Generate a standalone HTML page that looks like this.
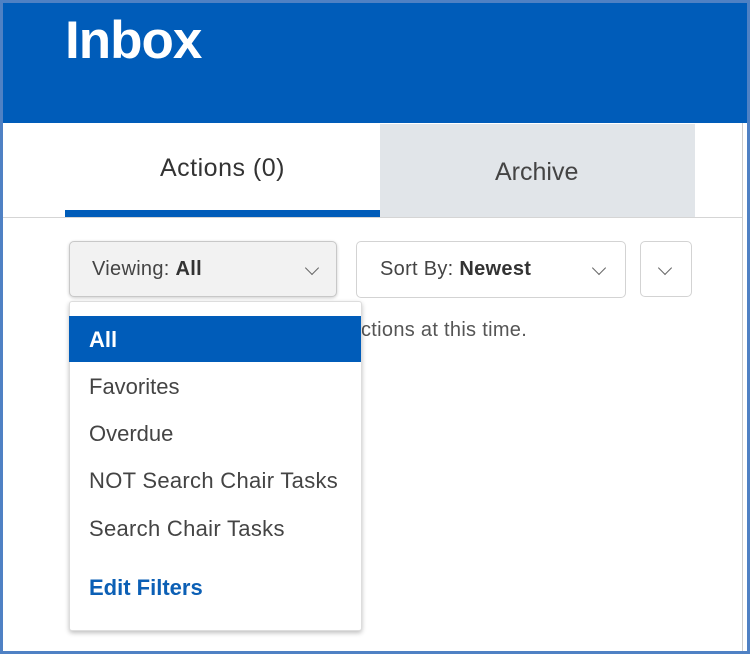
<!DOCTYPE html>
<html><head><style>
body{margin:0;width:750px;height:654px;overflow:hidden;background:#fff;font-family:"Liberation Sans",sans-serif;position:relative}
.a{position:absolute}
.frame{left:0;top:0;width:744px;height:648px;border:3px solid #4f81c4}
.hdr{left:3px;top:3px;width:744px;height:120px;background:#005cb9}
.t{font-size:22px;color:#444;white-space:nowrap}
.box{border:1px solid #d3d3d3;border-radius:5px;background:#fff}
.chev{width:9px;height:9px;border-right:1.5px solid #666;border-bottom:1.5px solid #666;transform:rotate(45deg)}
</style></head><body>
<div class="a frame"></div>
<div class="a hdr"></div>
<div class="a" style="left:65px;top:10px;font-size:53px;font-weight:bold;color:#fff;letter-spacing:-1px">Inbox</div>
<div class="a" style="left:742px;top:123px;width:1px;height:528px;background:#ccc"></div>
<div class="a" style="left:380px;top:124px;width:315px;height:93px;background:#e1e5e9"></div>
<div class="a" style="left:3px;top:217px;width:739px;height:1px;background:#d5d5d5"></div>
<div class="a" style="left:65px;top:210px;width:315px;height:7px;background:#005cb9"></div>
<div class="a t" style="left:160px;top:154px;font-size:25px;color:#333;letter-spacing:0.5px">Actions (0)</div>
<div class="a t" style="left:495px;top:158px;font-size:25px;color:#444">Archive</div>
<div class="a box" style="left:69px;top:241px;width:266px;height:54px;background:#f2f2f2;border-color:#c8c8c8;box-shadow:0 1px 3px rgba(0,0,0,.2)"></div>
<div class="a t" style="left:92px;top:258px;font-size:20px;letter-spacing:0.3px">Viewing: <b style="color:#333">All</b></div>
<div class="a chev" style="left:307px;top:263px"></div>
<div class="a box" style="left:356px;top:241px;width:268px;height:55px"></div>
<div class="a t" style="left:380px;top:258px;font-size:20px;letter-spacing:0.3px">Sort By: <b style="color:#333">Newest</b></div>
<div class="a chev" style="left:594px;top:263px"></div>
<div class="a box" style="left:640px;top:241px;width:50px;height:54px"></div>
<div class="a chev" style="left:660px;top:263px"></div>
<div class="a t" style="left:361px;top:319px;font-size:20px;color:#555;letter-spacing:0.3px">ctions at this time.</div>
<div class="a" style="left:69px;top:301px;width:291px;height:328px;background:#fff;border:1px solid #ddd;border-radius:3px;box-shadow:0 2px 5px rgba(0,0,0,.25)"></div>
<div class="a" style="left:69px;top:316px;width:292px;height:46px;background:#005cb9"></div>
<div class="a t" style="left:89px;top:327px;color:#fff;font-weight:bold">All</div>
<div class="a t" style="left:89px;top:374px">Favorites</div>
<div class="a t" style="left:89px;top:421px">Overdue</div>
<div class="a t" style="left:89px;top:468px;letter-spacing:0.3px">NOT Search Chair Tasks</div>
<div class="a t" style="left:89px;top:516px;letter-spacing:0.3px">Search Chair Tasks</div>
<div class="a t" style="left:89px;top:575px;color:#0b5fb5;font-weight:bold">Edit Filters</div>
</body></html>
